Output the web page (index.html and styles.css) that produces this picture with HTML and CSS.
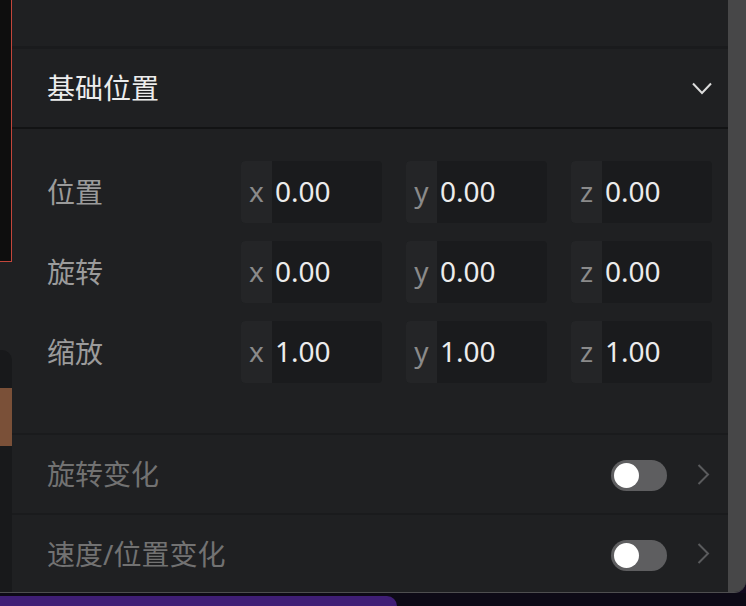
FILE: index.html
```html
<!DOCTYPE html>
<html lang="zh-CN">
<head>
<meta charset="utf-8">
<title>基础位置</title>
<link rel="stylesheet" href="styles.css">
</head>
<body>
<div class="window">
  <div class="left-strip">
    <div class="ls-top"></div>
    <div class="ls-gap"></div>
    <div class="ls-card"><div class="ls-brown"></div></div>
  </div>
  <div class="panel">
    <div class="top-space"></div>
    <div class="header">
      <span class="header-title">基础位置</span>
      <svg class="chev-down" width="20" height="13" viewBox="0 0 20 13"><polyline points="1,1.5 10,11 19,1.5" fill="none" stroke="#dcdcdc" stroke-width="2"/></svg>
    </div>
    <div class="grid">
      <div class="label">位置</div>
      <div class="field"><span class="pre">x</span><span class="val">0.00</span></div>
      <div class="field"><span class="pre">y</span><span class="val">0.00</span></div>
      <div class="field"><span class="pre">z</span><span class="val">0.00</span></div>
      <div class="label">旋转</div>
      <div class="field"><span class="pre">x</span><span class="val">0.00</span></div>
      <div class="field"><span class="pre">y</span><span class="val">0.00</span></div>
      <div class="field"><span class="pre">z</span><span class="val">0.00</span></div>
      <div class="label">缩放</div>
      <div class="field"><span class="pre">x</span><span class="val">1.00</span></div>
      <div class="field"><span class="pre">y</span><span class="val">1.00</span></div>
      <div class="field"><span class="pre">z</span><span class="val">1.00</span></div>
    </div>
    <div class="opt-row first">
      <span class="opt-label">旋转变化</span>
      <div class="toggle"><span class="knob"></span></div>
      <svg class="chev-right" width="13" height="21" viewBox="0 0 13 21"><polyline points="1.5,1 11,10.5 1.5,20" fill="none" stroke="#5a5b5d" stroke-width="2"/></svg>
    </div>
    <div class="opt-row last">
      <span class="opt-label">速度/位置变化</span>
      <div class="toggle"><span class="knob"></span></div>
      <svg class="chev-right" width="13" height="21" viewBox="0 0 13 21"><polyline points="1.5,1 11,10.5 1.5,20" fill="none" stroke="#5a5b5d" stroke-width="2"/></svg>
    </div>
  </div>
  <div class="scrollbar"></div>
</div>
<div class="dock">
  <div class="dock-bar"></div>
</div>
</body>
</html>
```
FILE: styles.css
```css
* { box-sizing: border-box; }
html, body {
  margin: 0;
  padding: 0;
  background: #120a1f;
  width: 746px;
  height: 606px;
  overflow: hidden;
  font-family: "Noto Sans", "Noto Sans CJK SC", sans-serif;
}
.window {
  display: flex;
  width: 746px;
  height: 593px;
  border-bottom: 1px solid #4e4e50;
  border-bottom-right-radius: 12px;
  overflow: hidden;
  background: #1f2022;
}
.left-strip {
  width: 12px;
  display: flex;
  flex-direction: column;
}
.ls-top {
  height: 262px;
  background: #0e0e0e;
  border-right: 1px solid #c2463b;
  border-bottom: 1px solid #c2463b;
}
.ls-gap {
  height: 88px;
  background: #1f2022;
}
.ls-card {
  flex: 1;
  background: #18191b;
  border-top-right-radius: 10px;
  padding-top: 38px;
}
.ls-brown {
  height: 58px;
  background: #7a5038;
}
.panel {
  width: 716px;
  display: flex;
  flex-direction: column;
  background: #1f2022;
}
.top-space {
  height: 49px;
  border-bottom: 3px solid #1a1b1d;
}
.header {
  height: 80px;
  border-bottom: 2px solid #121314;
  display: flex;
  align-items: center;
  justify-content: space-between;
  padding: 0 16px 0 35px;
}
.header-title {
  font-size: 28px;
  font-weight: 400;
  color: #ececec;
  line-height: 1;
}
.chev-down { display: block; }
.grid {
  display: grid;
  grid-template-columns: 170px repeat(3, 141px);
  grid-auto-rows: 62px;
  column-gap: 24px;
  row-gap: 18px;
  padding: 32px 0 50px 35px;
}
.label {
  display: flex;
  align-items: center;
  font-size: 28px;
  color: #9b9b9b;
  padding-bottom: 2px;
}
.field {
  display: flex;
  border-radius: 4px;
  overflow: hidden;
  background: #1a1b1d;
}
.pre {
  width: 31px;
  background: #242527;
  color: #8a8a8a;
  font-size: 28px;
  display: flex;
  align-items: center;
  justify-content: center;
  padding-bottom: 2px;
}
.val {
  display: flex;
  align-items: center;
  padding-left: 3px;
  font-size: 28px;
  color: #ececec;
  padding-bottom: 2px;
}
.opt-row {
  display: flex;
  align-items: center;
  border-top: 2px solid #1a1b1d;
  padding: 0 18px 0 35px;
}
.opt-row.first { height: 80px; }
.opt-row.last { height: 79px; }
.opt-label {
  flex: 1;
  font-size: 28px;
  color: #727272;
  padding-bottom: 2px;
}
.toggle {
  width: 56px;
  height: 31px;
  border-radius: 16px;
  background: #5e5e60;
  padding: 3px;
  margin-right: 30px;
  margin-top: 3px;
}
.knob {
  display: block;
  width: 25px;
  height: 25px;
  border-radius: 50%;
  background: #ffffff;
}
.chev-right { display: block; }
.scrollbar {
  width: 18px;
  background: #474748;
}
.dock {
  height: 13px;
  padding-top: 3px;
  background: #0d0a16;
}
.dock-bar {
  width: 397px;
  height: 10px;
  background: #3f1e76;
  border-top-right-radius: 20px;
}
```
